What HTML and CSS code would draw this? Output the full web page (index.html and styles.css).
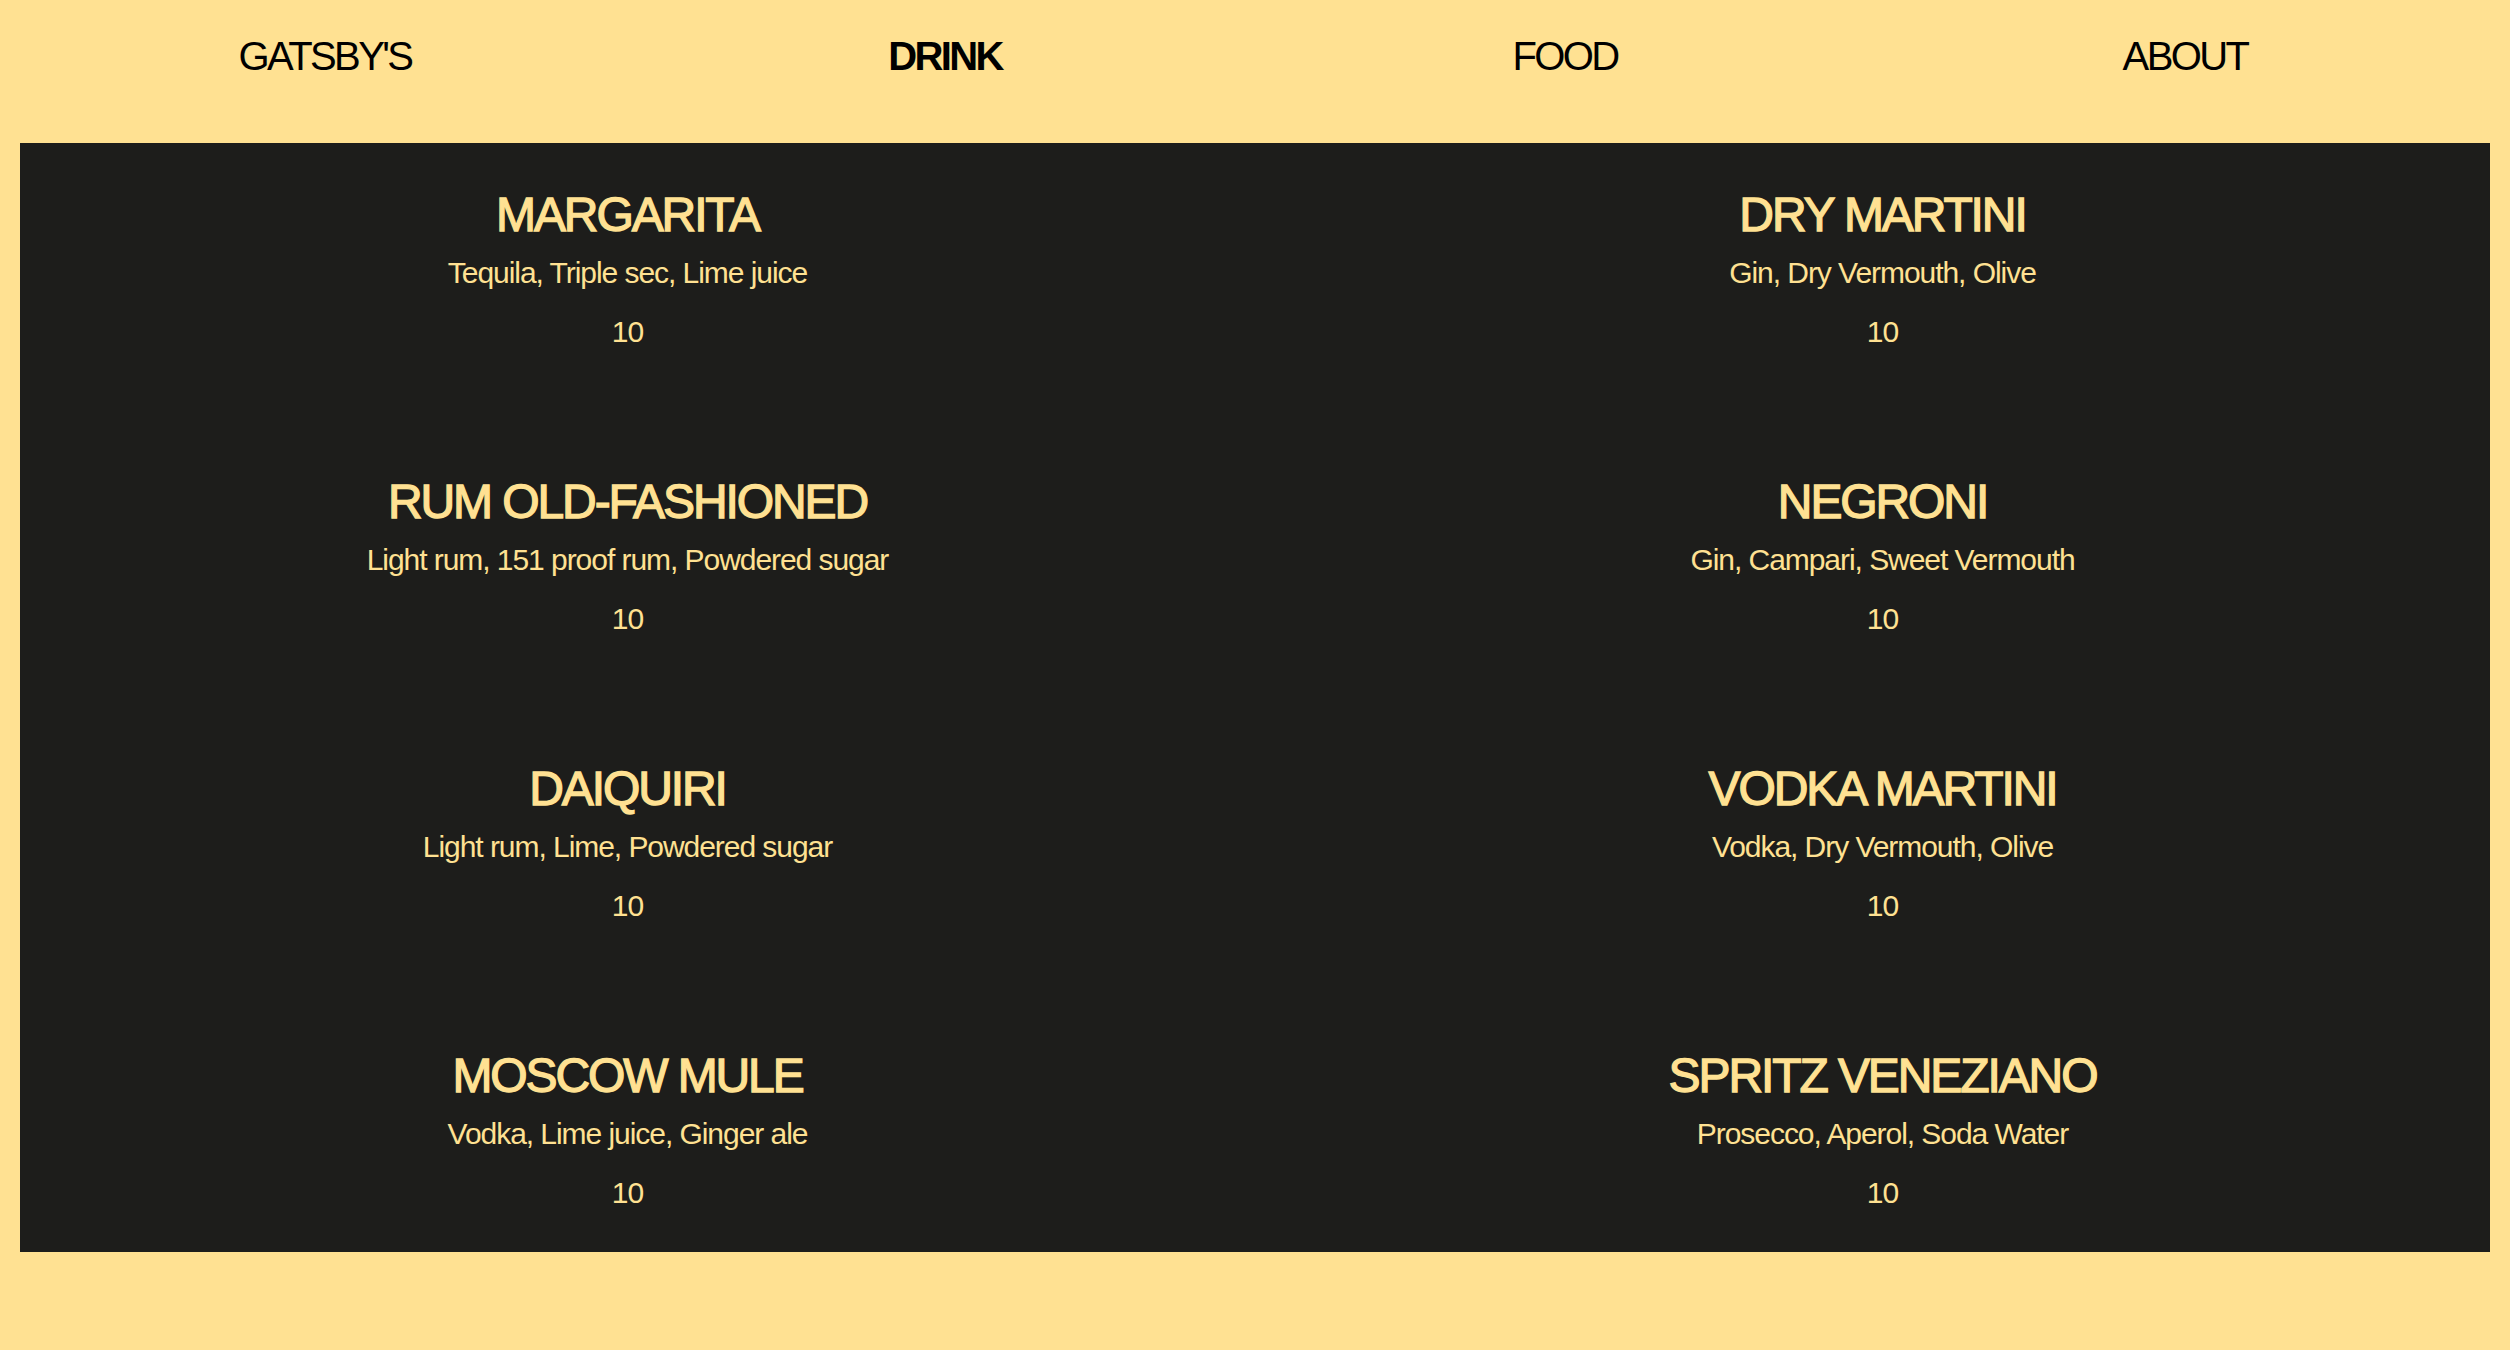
FILE: index.html
```html
<!DOCTYPE html>
<html lang="en">
<head>
<meta charset="utf-8">
<title>Gatsby's — Drink</title>
<link rel="stylesheet" href="styles.css">
</head>
<body>
  <nav class="nav">
    <a class="nav-link" href="#">GATSBY'S</a>
    <a class="nav-link active" href="#">DRINK</a>
    <a class="nav-link" href="#">FOOD</a>
    <a class="nav-link" href="#">ABOUT</a>
  </nav>
  <main class="menu">
    <div class="item">
      <h2 class="item-name">MARGARITA</h2>
      <p class="item-desc">Tequila, Triple sec, Lime juice</p>
      <p class="item-price">10</p>
    </div>
    <div class="item">
      <h2 class="item-name">DRY MARTINI</h2>
      <p class="item-desc">Gin, Dry Vermouth, Olive</p>
      <p class="item-price">10</p>
    </div>
    <div class="item">
      <h2 class="item-name">RUM OLD-FASHIONED</h2>
      <p class="item-desc">Light rum, 151 proof rum, Powdered sugar</p>
      <p class="item-price">10</p>
    </div>
    <div class="item">
      <h2 class="item-name">NEGRONI</h2>
      <p class="item-desc">Gin, Campari, Sweet Vermouth</p>
      <p class="item-price">10</p>
    </div>
    <div class="item">
      <h2 class="item-name">DAIQUIRI</h2>
      <p class="item-desc">Light rum, Lime, Powdered sugar</p>
      <p class="item-price">10</p>
    </div>
    <div class="item">
      <h2 class="item-name">VODKA MARTINI</h2>
      <p class="item-desc">Vodka, Dry Vermouth, Olive</p>
      <p class="item-price">10</p>
    </div>
    <div class="item">
      <h2 class="item-name">MOSCOW MULE</h2>
      <p class="item-desc">Vodka, Lime juice, Ginger ale</p>
      <p class="item-price">10</p>
    </div>
    <div class="item">
      <h2 class="item-name">SPRITZ VENEZIANO</h2>
      <p class="item-desc">Prosecco, Aperol, Soda Water</p>
      <p class="item-price">10</p>
    </div>
  </main>
</body>
</html>
```
FILE: styles.css
```css
* {
  box-sizing: border-box;
}

html, body {
  margin: 0;
  padding: 0;
}

html {
  background: #ffe192;
}

body {
  font-family: "Liberation Sans", Arial, Helvetica, sans-serif;
  padding: 0 20px;
}

.nav {
  display: grid;
  grid-template-columns: repeat(4, 1fr);
  column-gap: 10px;
  padding-top: 31px;
  padding-bottom: 62px;
}

.nav-link {
  display: block;
  text-align: center;
  font-size: 40px;
  line-height: 50px;
  letter-spacing: -2.6px;
  color: #000;
  text-decoration: none;
}

.nav-link.active {
  font-weight: 700;
}

.menu {
  background: #1d1d1b;
  display: grid;
  grid-template-columns: 1fr 1fr;
  column-gap: 40px;
  row-gap: 122px;
  padding: 44px 0 39px;
  color: #ffe192;
}

.item {
  display: flex;
  flex-direction: column;
  align-items: center;
  text-align: center;
}

.item-name {
  margin: 0;
  font-size: 48px;
  line-height: 56px;
  font-weight: 400;
  letter-spacing: -2.1px;
  -webkit-text-stroke: 1.3px #ffe192;
}

.item-desc {
  margin: 10px 0 0;
  font-size: 30px;
  line-height: 40px;
  letter-spacing: -1.05px;
}

.item-price {
  margin: 19px 0 0;
  font-size: 30px;
  line-height: 40px;
  letter-spacing: -1px;
}
```
